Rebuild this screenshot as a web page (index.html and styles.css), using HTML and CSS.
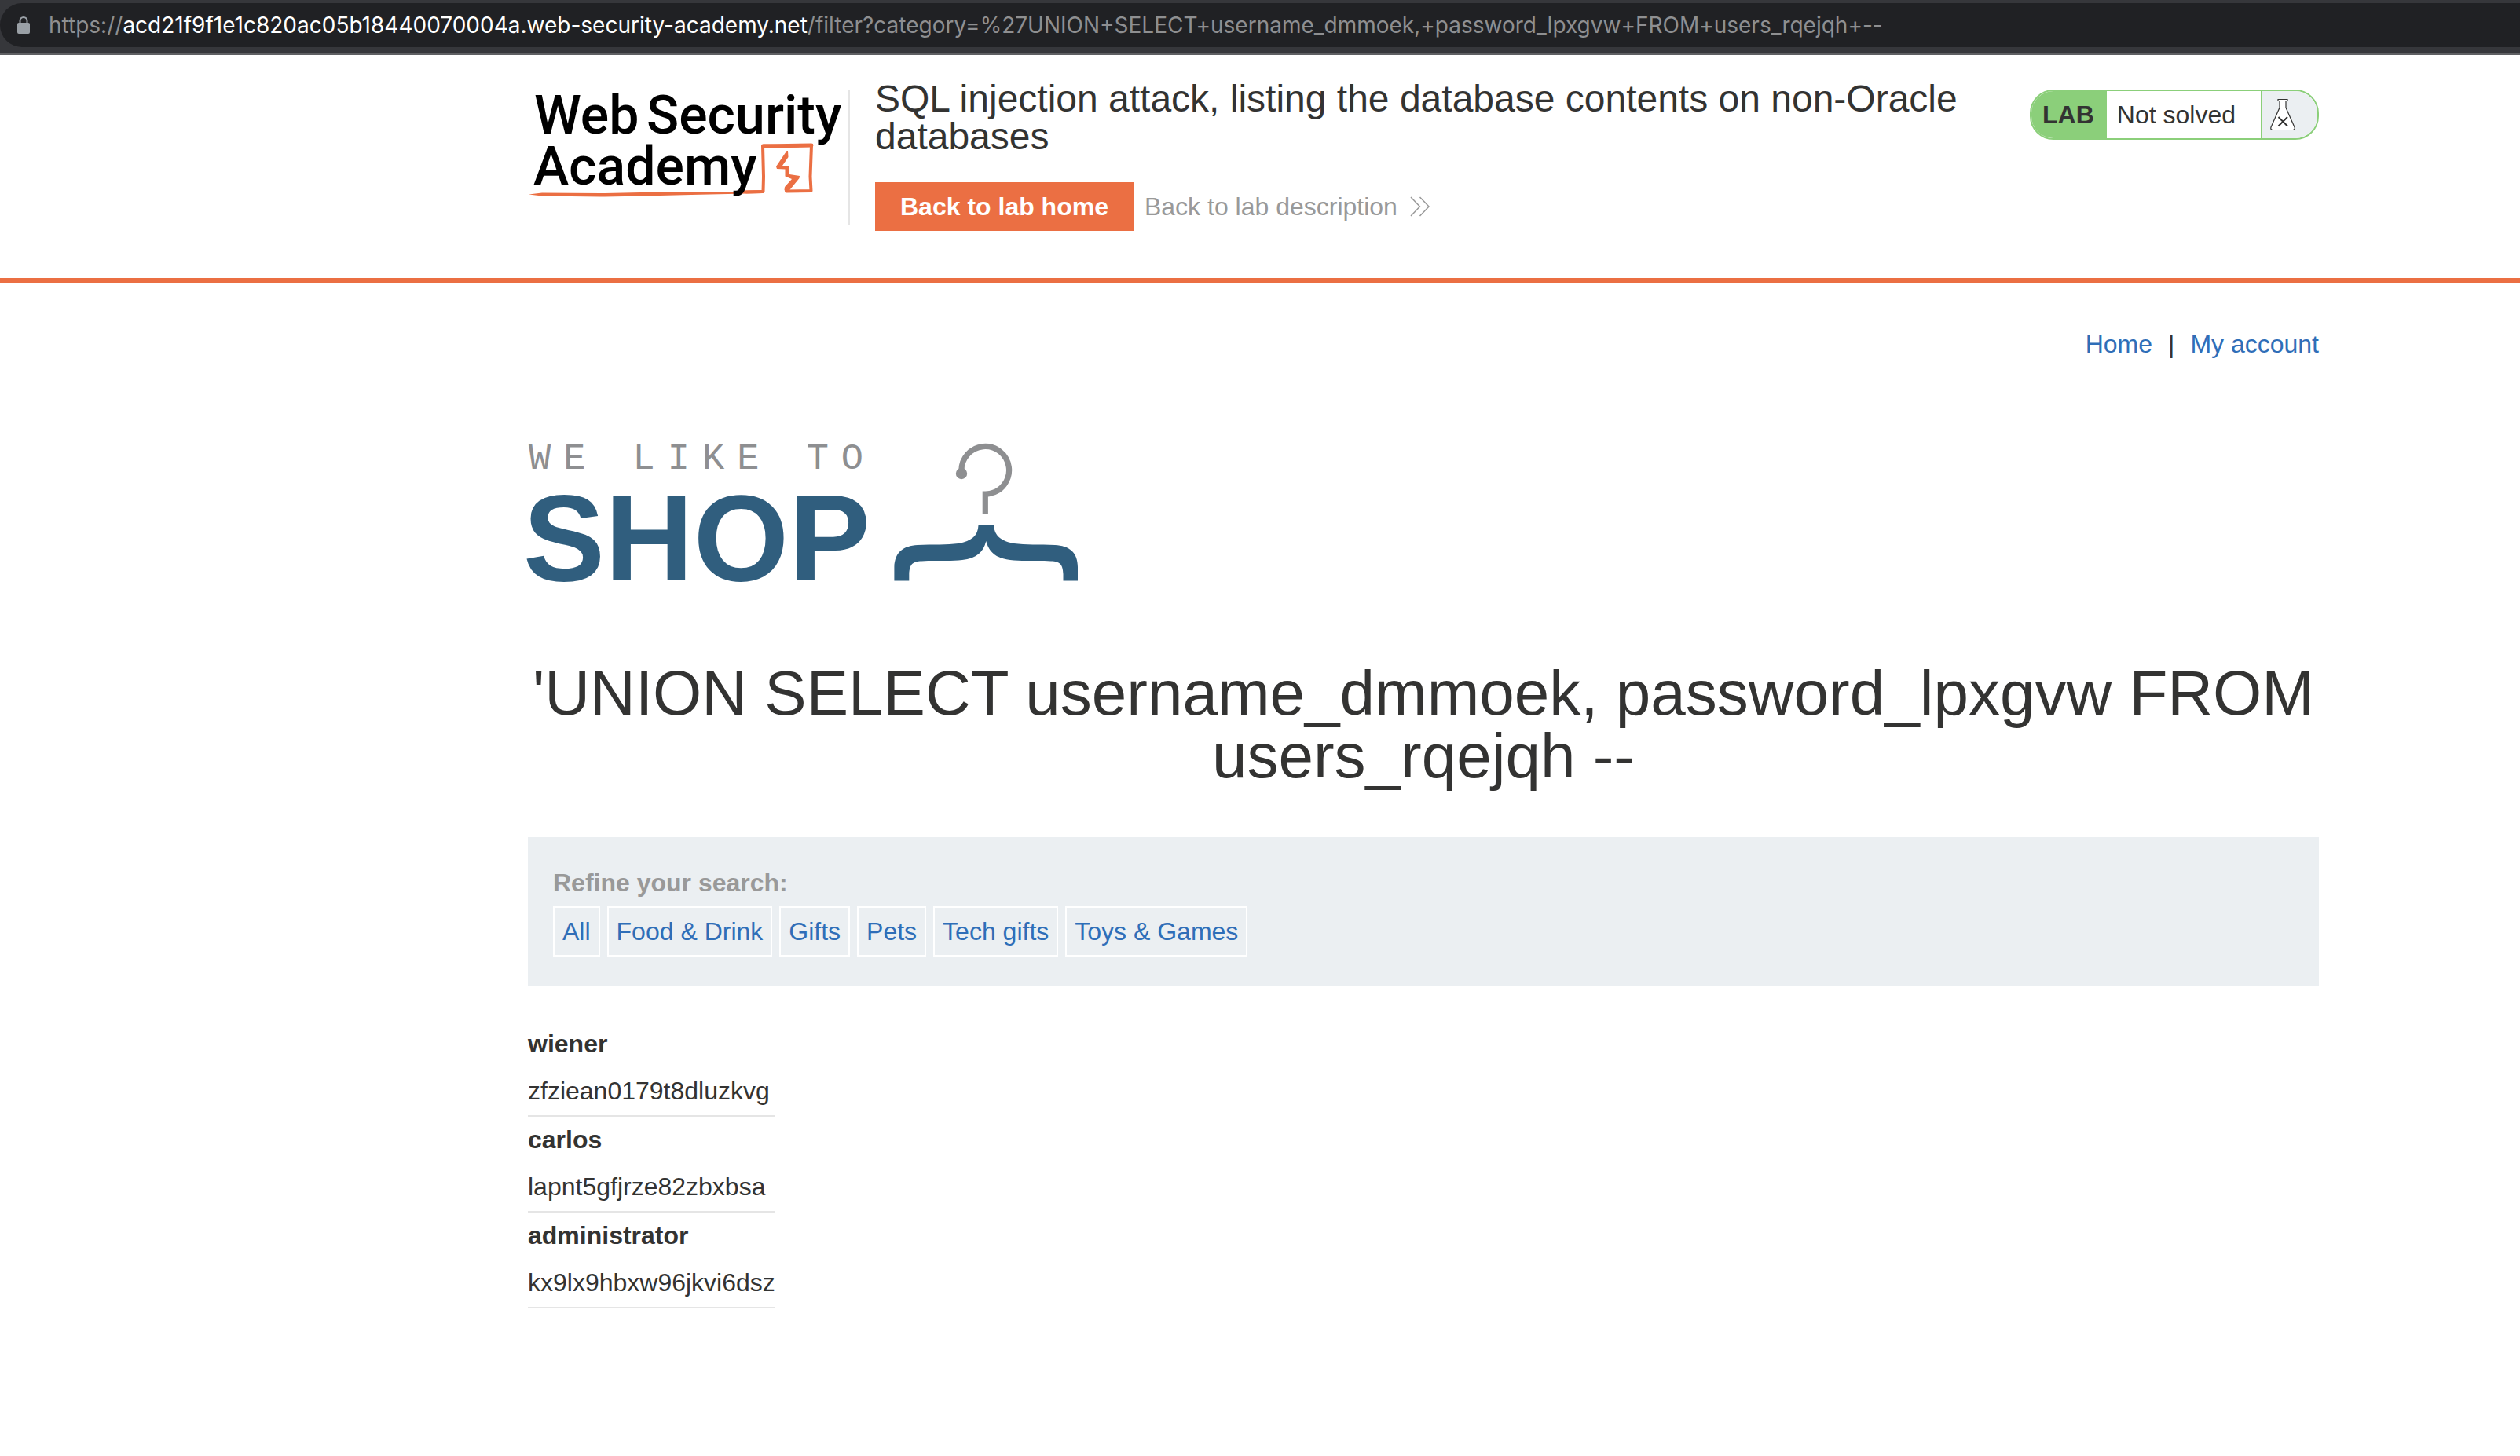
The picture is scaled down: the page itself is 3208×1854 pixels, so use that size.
FILE: index.html
```html
<!DOCTYPE html>
<html lang="en">
<head>
<meta charset="utf-8">
<title>SQL injection attack, listing the database contents on non-Oracle databases</title>
<link rel="stylesheet" href="styles.css">
</head>
<body>
<div class="browser-bar">
  <div class="address">
    <svg class="lock" viewBox="0 0 16 22" aria-hidden="true"><path d="M3.500 9V5.500a4.500 4.500 0 0 1 9 0V9" fill="none" stroke="#9aa0a6" stroke-width="2"/><rect x="0" y="8" width="16" height="14" rx="2" fill="#9aa0a6"/></svg>
    <span class="url">https://<b class="host">acd21f9f1e1c820ac05b18440070004a.web-security-academy.net</b>/filter?category=%27UNION+SELECT+username_dmmoek,+password_lpxgvw+FROM+users_rqejqh+--</span>
  </div>
</div>

<header class="lab-header">
  <div class="container header-row">
    <div class="brand">
      <svg class="brand-logo" viewBox="672 114 400 140" role="img" aria-label="Web Security Academy">
        <path d="M673 247.500L690 245.500 770 246 860 244 927 244.500 950 242.500 970 242V246L950 246.500 880 248 820 249.500 770 250.500 690 249.500Z" fill="#eb6f43"/>
        <g fill="none" stroke="#eb6f43" stroke-linejoin="round" stroke-linecap="round">
          <path d="M950 244.500L971.500 244 972 225 971 185.500 1000 186 1033 185" stroke-width="4"/>
          <path d="M972 186L1033 185" stroke-width="5"/>
          <path d="M1033 185L1031.500 225 1032.500 243 1001 243.500" stroke-width="4"/>
        </g>
        <path d="M1001.500 192L1003 192 1003.500 200 996 211 1004.500 212 1005 222 1018 224 1017.500 227 1004 243.500 1001 245 998.500 242 999 238 1008 228 999.500 224.500 999.500 215.500 989 215 988 212Z" fill="#eb6f43"/>
        <text class="brand-text" x="680" y="170">Web</text>
        <text class="brand-text" x="823" y="170">Security</text>
        <text class="brand-text" x="679" y="235">Academy</text>
      </svg>
    </div>
    <div class="lab-info">
      <h2 class="lab-title">SQL injection attack, listing the database contents on non-Oracle databases</h2>
      <div class="lab-actions">
        <a class="button-home" href="#home">Back to lab home</a>
        <a class="link-description" href="#description">Back to lab description
          <svg class="chevrons" viewBox="0 0 26 26" aria-hidden="true"><path d="M1 1L12.500 13 1 25M12.500 1L24 13 12.500 25" fill="none" stroke="#999" stroke-width="1.500"/></svg>
        </a>
      </div>
    </div>
    <div class="lab-status">
      <span class="status-tag">LAB</span>
      <span class="status-text">Not solved</span>
      <span class="status-icon">
        <svg class="flask" viewBox="0 0 34 42" aria-hidden="true"><path d="M11 1.500H23V3.500H21V12L32 37Q33 40 30 40.500H4Q1 40 2 37L13 12V3.500H11Z" fill="#fff" stroke="#333332" stroke-width="1.200"/><path d="M11.500 24L23 35.500M23 24L11.500 35.500" stroke="#333332" stroke-width="2"/></svg>
      </span>
    </div>
  </div>
</header>

<main class="container page">
  <nav class="top-links"><a href="#home">Home</a><span>|</span><a href="#account">My account</a></nav>
  <svg class="shop-logo" viewBox="672 560 700 186" role="img" aria-label="We like to shop">
    <text class="shop-small" x="673" y="597">WE LIKE TO</text>
    <text class="shop-big" x="666" y="739">SHOP</text>
    <circle cx="1224" cy="603" r="7.200" fill="#8e8f91"/>
    <path d="M1224 600A30.300 30.300 0 1 1 1260 628.500Q1258 629 1254.300 629V655" fill="none" stroke="#8e8f91" stroke-width="7.200"/>
    <path d="M1138.400 739.500V722C1139 703 1150 695 1168 694C1188 693 1206 694 1220 692C1237 689 1245 682 1245.500 669H1265C1266 682 1274 689 1291 692C1305 694 1323 693 1343 694C1361 695 1372 703 1372 722V739.500H1353.500V731C1353 718 1349 715 1338 714.500C1322 713 1302 715 1286 713C1268 711 1259 703 1255.300 689C1252 703 1243 711 1225 713C1209 715 1189 713 1173 714.500C1162 715 1158 718 1157.300 731V739.500Z" fill="#305e7e"/>
  </svg>
  <h1 class="page-title">'UNION SELECT username_dmmoek, password_lpxgvw FROM users_rqejqh --</h1>
  <section class="filters">
    <h3 class="filters-title">Refine your search:</h3>
    <div class="filter-list">
      <a href="#all">All</a>
      <a href="#food">Food &amp; Drink</a>
      <a href="#gifts">Gifts</a>
      <a href="#pets">Pets</a>
      <a href="#tech">Tech gifts</a>
      <a href="#toys">Toys &amp; Games</a>
    </div>
  </section>
  <table class="results">
    <tbody><tr><th scope="rowgroup">wiener</th></tr><tr><td>zfziean0179t8dluzkvg</td></tr></tbody>
    <tbody><tr><th scope="rowgroup">carlos</th></tr><tr><td>lapnt5gfjrze82zbxbsa</td></tr></tbody>
    <tbody><tr><th scope="rowgroup">administrator</th></tr><tr><td>kx9lx9hbxw96jkvi6dsz</td></tr></tbody>
  </table>
</main>
</body>
</html>
```
FILE: styles.css
```css
* { box-sizing: border-box; }
body {
  margin: 0;
  background: #fff;
  color: #333332;
  font-family: "Liberation Sans", Arial, sans-serif;
  font-size: 32px;
  line-height: 36px;
}
a { color: #2f6eb8; text-decoration: none; }
h1, h2, h3 { margin: 0; font-weight: 400; }

.browser-bar {
  padding: 4px 0 8px;
  background: #36373b;
  border-bottom: 2px solid #5f6063;
}
.address {
  display: flex;
  align-items: center;
  gap: 24px;
  height: 56px;
  padding: 0 22px;
  background: #202124;
  border-radius: 28px 0 0 28px;
}
.lock { width: 16px; height: 22px; }
.url {
  color: #8e8f91;
  font-family: Inter, sans-serif;
  font-size: 28px;
  white-space: nowrap;
}
.host { color: #fff; font-weight: 400; }

.container {
  width: calc(100% - 928px);
  max-width: 2280px;
  margin: 0 256px 0 auto;
}
.lab-header {
  padding: 32px 0 60px;
  border-bottom: 6px solid #eb6f43;
}
.header-row { display: flex; align-items: flex-start; }
.brand {
  height: 172px;
  margin-top: 12px;
  padding-right: 8px;
  border-right: 2px solid #e5e5e5;
}
.brand-logo { display: block; width: 400px; height: 140px; overflow: visible; }
.brand-text { font-family: Roboto, sans-serif; font-size: 68px; font-weight: 500; fill: #000; }
.lab-info { flex: 1; padding-left: 32px; }
.lab-title { font-size: 48px; line-height: 48px; }
.lab-actions { display: flex; align-items: center; gap: 14px; margin-top: 34px; }
.button-home {
  padding: 13px 32px;
  background: #eb6f43;
  color: #fff;
  font-weight: 700;
}
.link-description { display: flex; align-items: center; gap: 16px; color: #999; }
.chevrons { width: 26px; height: 26px; }
.lab-status {
  display: flex;
  height: 64px;
  margin-top: 12px;
  overflow: hidden;
  border: 2px solid #8bcf7a;
  border-radius: 30px;
  line-height: 60px;
}
.status-tag { padding: 0 16px 0 14px; background: #8bcf7a; font-weight: 700; }
.status-text { padding: 0 32px 0 13px; border-right: 2px solid #8bcf7a; }
.status-icon { display: flex; align-items: center; width: 70px; padding-left: 9px; background: #ebeff2; }
.flask { width: 34px; height: 42px; }

.page { padding: 60px 0; }
.top-links { display: flex; justify-content: flex-end; gap: 20px; }
.shop-logo { display: block; width: 700px; height: 186px; margin-top: 104px; overflow: visible; }
.shop-small { font-family: "Liberation Mono", "Courier New", monospace; font-size: 47px; letter-spacing: 16px; fill: #8e8f91; }
.shop-big { font-size: 156px; font-weight: 700; fill: #305e7e; }
.page-title {
  margin: 97px 0 63px;
  font-size: 80px;
  line-height: 80px;
  text-align: center;
}
.filters { padding: 40px 32px 38px; background: #ebeff2; }
.filters-title { color: #999; font-size: 32px; font-weight: 700; }
.filter-list { display: flex; gap: 9px; margin-top: 12px; }
.filter-list a { padding: 12px 10px; border: 2px solid #fff; }
.results { margin-top: 44px; border-collapse: collapse; text-align: left; }
.results th, .results td { padding: 11px 0 13px; }
.results td { border-bottom: 2px solid #e5e5e5; }
```
